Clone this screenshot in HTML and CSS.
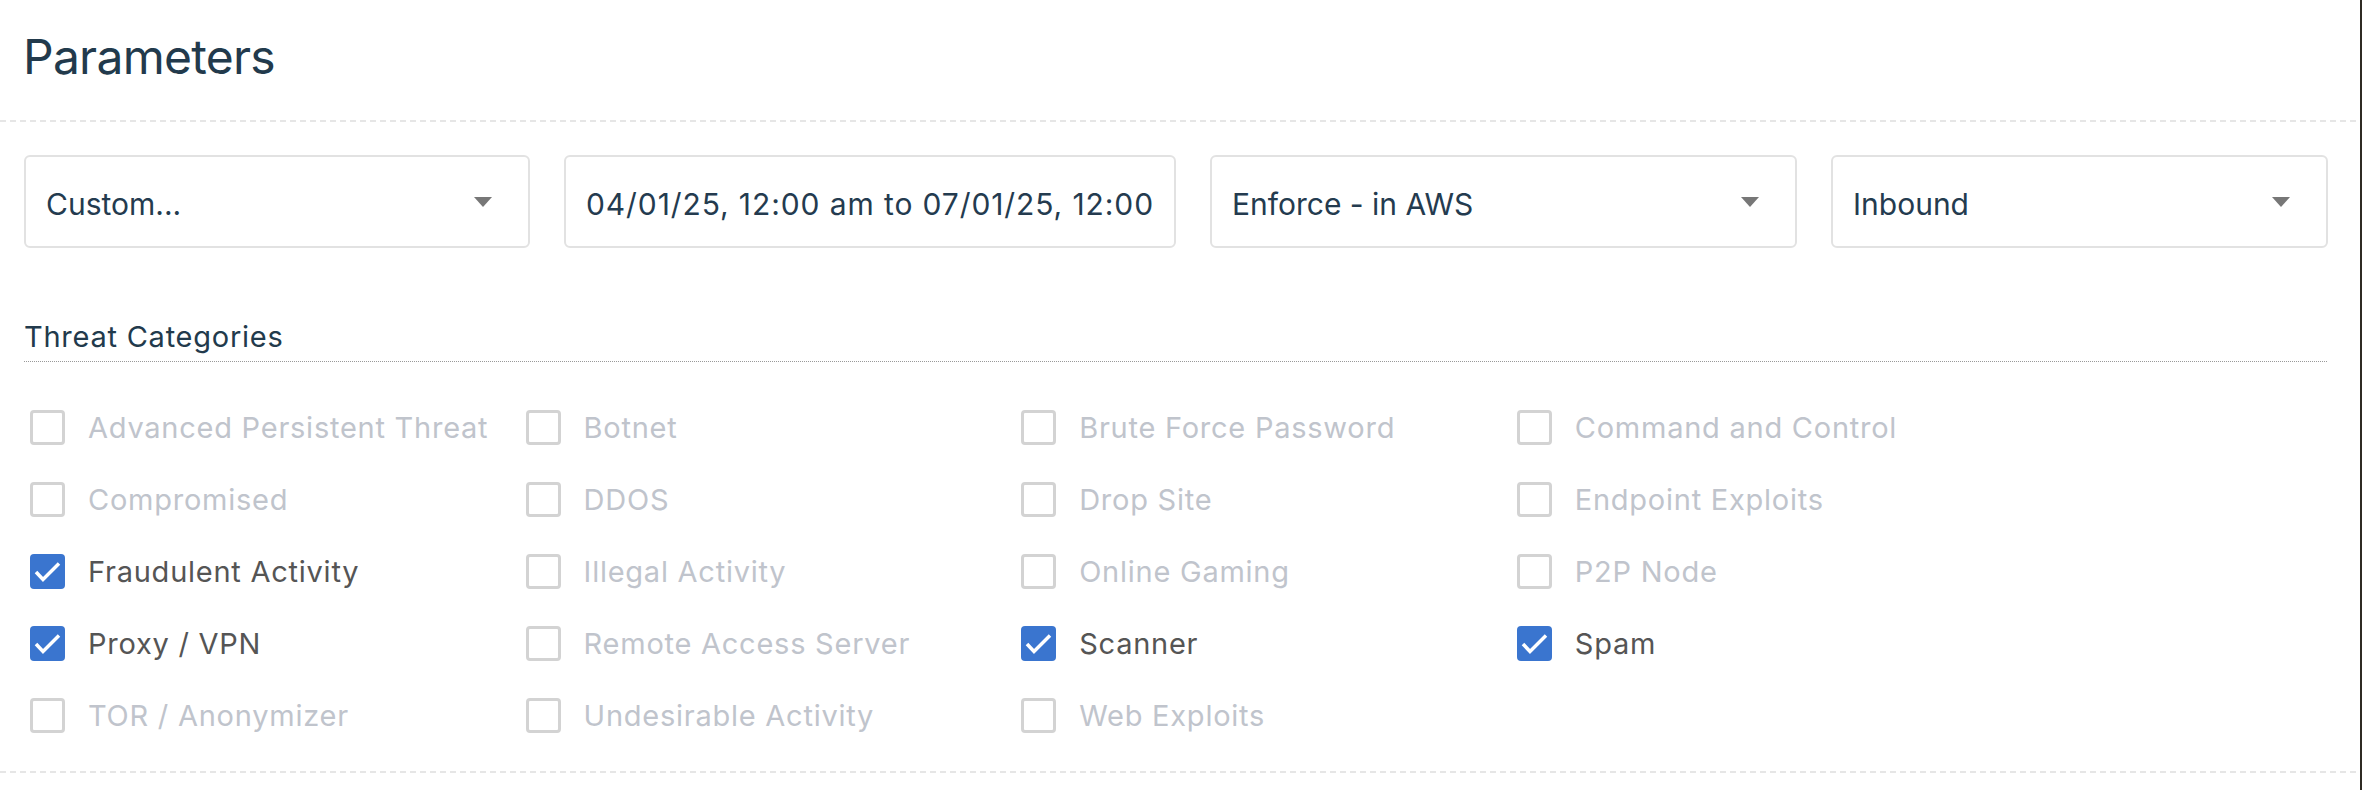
FILE: index.html
```html
<!DOCTYPE html>
<html lang="en">

<head>
    <meta charset="UTF-8">
    <title>Parameters</title>
    <link rel="stylesheet" href="styles.css">
</head>

<body>
    <div class="page">
        <div class="header">
            <h1>Parameters</h1>
        </div>
        <div class="rule"></div>

        <div class="filters">
            <div class="select w-range">
                <span>Custom...</span>
                <span class="caret"></span>
            </div>
            <div class="select w-date">
                <span class="clip">04/01/25, 12:00 am to 07/01/25, 12:00 am</span>
            </div>
            <div class="select w-mode">
                <span>Enforce - in AWS</span>
                <span class="caret"></span>
            </div>
            <div class="select w-dir">
                <span>Inbound</span>
                <span class="caret"></span>
            </div>
        </div>

        <div class="threats">
            <div class="threats-title">Threat Categories</div>
            <div class="grid">
                <label class="item"><span class="box"></span>Advanced Persistent Threat</label>
                <label class="item"><span class="box"></span>Botnet</label>
                <label class="item"><span class="box"></span>Brute Force Password</label>
                <label class="item"><span class="box"></span>Command and Control</label>

                <label class="item"><span class="box"></span>Compromised</label>
                <label class="item"><span class="box"></span>DDOS</label>
                <label class="item"><span class="box"></span>Drop Site</label>
                <label class="item"><span class="box"></span>Endpoint Exploits</label>

                <label class="item on"><span class="box"><svg viewBox="0 0 35 35"><path d="M6 18 L13 25.5 L29 9.5" /></svg></span>Fraudulent Activity</label>
                <label class="item"><span class="box"></span>Illegal Activity</label>
                <label class="item"><span class="box"></span>Online Gaming</label>
                <label class="item"><span class="box"></span>P2P Node</label>

                <label class="item on"><span class="box"><svg viewBox="0 0 35 35"><path d="M6 18 L13 25.5 L29 9.5" /></svg></span>Proxy / VPN</label>
                <label class="item"><span class="box"></span>Remote Access Server</label>
                <label class="item on"><span class="box"><svg viewBox="0 0 35 35"><path d="M6 18 L13 25.5 L29 9.5" /></svg></span>Scanner</label>
                <label class="item on"><span class="box"><svg viewBox="0 0 35 35"><path d="M6 18 L13 25.5 L29 9.5" /></svg></span>Spam</label>

                <label class="item"><span class="box"></span>TOR / Anonymizer</label>
                <label class="item"><span class="box"></span>Undesirable Activity</label>
                <label class="item"><span class="box"></span>Web Exploits</label>
            </div>
        </div>
        <div class="rule"></div>
    </div>
</body>

</html>
```

FILE: styles.css
```css
body {
    margin: 0;
    background: #2f2b24;
    font-family: Inter, "Noto Sans", sans-serif;
}

.page {
    width: 2360px;
    height: 790px;
    background: #fff;
    overflow: hidden;
}

.header {
    padding: 28px 24px 34px 23px;
}

h1 {
    margin: 0;
    font-size: 48px;
    line-height: 58px;
    font-weight: 400;
    letter-spacing: -0.75px;
    color: #223a4c;
}

.rule {
    height: 2px;
    background: repeating-linear-gradient(to right, #e6e6e6 0 6px, transparent 6px 10px);
}

.filters {
    display: flex;
    gap: 34px;
    padding: 33px 24px 0 24px;
}

.select {
    box-sizing: border-box;
    height: 93px;
    border: 2px solid #e2e2e2;
    border-radius: 6px;
    padding: 4px 36px 0 20px;
    display: flex;
    align-items: center;
    justify-content: space-between;
    font-size: 30px;
    color: #243b4f;
    white-space: nowrap;
}

.w-range {
    width: 506px;
}

.w-date {
    width: 612px;
    padding-right: 22px;
    letter-spacing: 0.9px;
}

.w-mode {
    width: 587px;
}

.w-dir {
    width: 497px;
}

.clip {
    overflow: hidden;
    width: 100%;
}

.caret {
    width: 0;
    height: 0;
    border-left: 9.5px solid transparent;
    border-right: 9.5px solid transparent;
    border-top: 10px solid #777;
    margin-top: -4px;
}

.threats {
    padding: 71px 33px 20px 24px;
}

.threats-title {
    font-size: 29px;
    line-height: 36px;
    letter-spacing: 0.75px;
    color: #223a4c;
    padding-bottom: 6px;
    border-bottom: 1px dotted #999;
}

.grid {
    display: grid;
    grid-template-columns: repeat(4, 495.6px);
    grid-auto-rows: 72px;
    margin-top: 29px;
}

.item {
    display: flex;
    align-items: center;
    gap: 23px;
    padding-left: 6px;
    font-size: 29px;
    letter-spacing: 0.75px;
    color: #c0c4cc;
    white-space: nowrap;
}

.item.on {
    color: #555;
}

.box {
    box-sizing: border-box;
    width: 35px;
    height: 35px;
    border: 3px solid #d3d3d3;
    border-radius: 4px;
    flex-shrink: 0;
}

.item.on .box {
    border: none;
    background: #3a75cf;
}

.box svg {
    display: block;
    width: 35px;
    height: 35px;
}

.box path {
    fill: none;
    stroke: #fff;
    stroke-width: 3.5;
}
```
